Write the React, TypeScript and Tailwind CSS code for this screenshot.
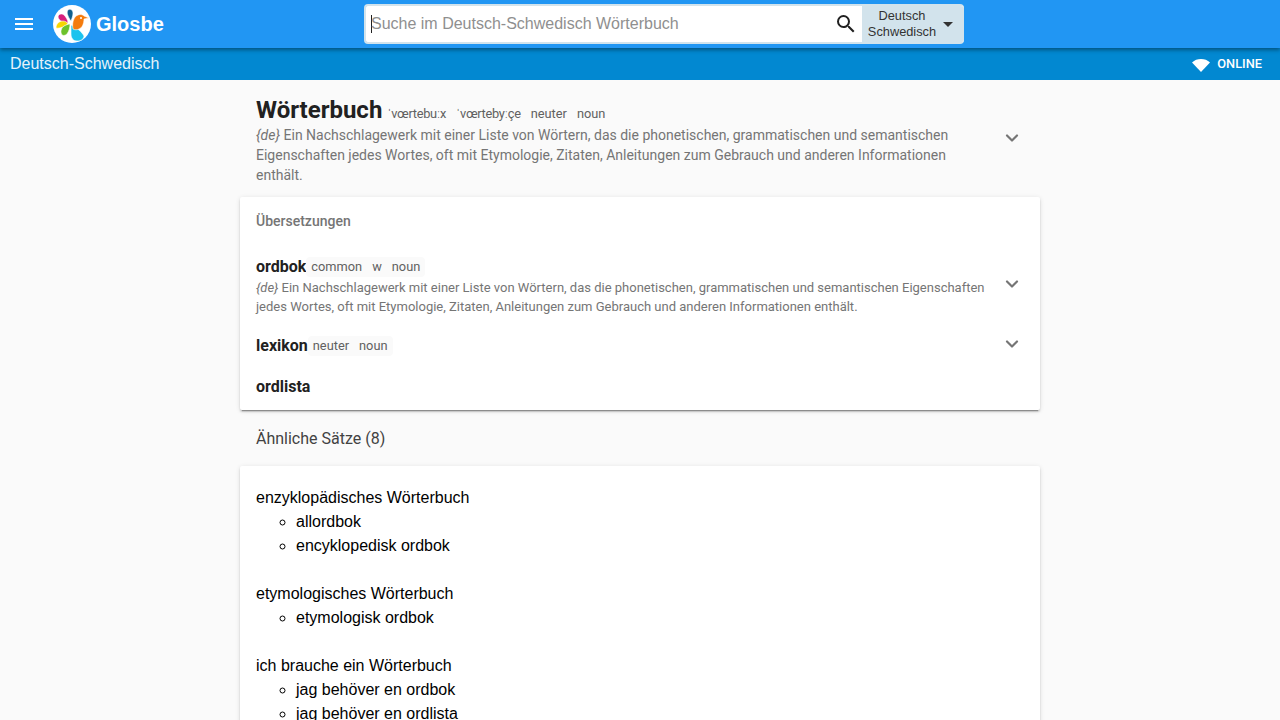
import { ChevronDown } from 'lucide-react'

const roboto = "font-['Roboto',sans-serif]"

function Logo() {
  return (
    <svg width="38" height="38" viewBox="0 0 38 38" className="shrink-0">
      <circle cx="19" cy="19" r="19" fill="#fff" />
      <g stroke="#fff" strokeWidth="0.6">
        <path d="M18 16C15 12 13 7 15 5c2-2 5 0 5 3 0 3-1 5-2 8z" fill="#0f5f8c" />
        <path d="M15 18C11 18 6 16 5 12c0-3 4-4 6-2 2 2 4 5 4 8z" fill="#d61f7c" />
        <path d="M3 23c0-4 3-7 7-7 2 0 4 1 5 3-3 2-8 5-12 4z" fill="#f7d600" />
        <path d="M9 30c-2-3-1-7 2-9 2-1 4-2 6-2 0 4-1 7-3 10-1 1-3 2-5 1z" fill="#6cc22b" />
        <path d="M18 20c5 2 11 7 13 11 0 3-3 5-7 5-4 0-6-3-6-7 0-3 0-6 0-9z" fill="#1cc3ee" />
        <path d="M20 24c-1-5 0-10 3-13 3-2 6-2 8 0l5 2-5 1c0 5-2 9-5 10-2 1-4 1-6 0z" fill="#f47b0d" />
      </g>
      <circle cx="28" cy="13" r="1" fill="#fff" />
    </svg>
  )
}

function Tag({ children }: { children: string }) {
  return <span className="px-[5px]">{children}</span>
}

function Tags({ items }: { items: string[] }) {
  return (
    <span className="inline-flex h-5 items-center rounded-sm bg-[#fafafa] text-[12.8px] text-[#616161]">
      {items.map((t) => (
        <Tag key={t}>{t}</Tag>
      ))}
    </span>
  )
}

function Chevron({ className }: { className: string }) {
  return <ChevronDown size={20} strokeWidth={2.6} className={`shrink-0 text-[#757575] ${className}`} />
}

const cardShadow = 'shadow-[0_2px_2px_rgba(0,0,0,0.14),0_3px_1px_-2px_rgba(0,0,0,0.3),0_1px_5px_rgba(0,0,0,0.12)]'

export default function App() {
  return (
    <div className={`h-[720px] w-[1280px] overflow-hidden bg-[#fafafa] ${roboto}`}>
      <header className="relative z-10 flex h-12 items-center bg-[#2196f3] font-['Liberation_Sans',sans-serif] shadow-[0_2px_4px_rgba(0,0,0,0.4)]">
        <div className="flex w-[364px] shrink-0 items-center">
          <svg width="24" height="24" viewBox="0 0 24 24" fill="#fff" className="ml-3">
            <path d="M3 18h18v-2H3v2zm0-5h18v-2H3v2zm0-7v2h18V6H3z" />
          </svg>
          <div className="ml-[17px]">
            <Logo />
          </div>
          <span className="ml-[5px] text-[20px] font-bold text-white">Glosbe</span>
        </div>
        <div className="flex h-10 w-[600px] items-stretch overflow-hidden rounded-sm border-2 border-[#d2e3ec] border-r-0 bg-white">
          <div className="flex flex-1 items-center pl-[5px] text-[16px] text-[#8f8f8f]">
            <span className="mr-[-1px] h-[18px] w-px bg-[#222]" />
            Suche im Deutsch-Schwedisch Wörterbuch
          </div>
          <div className="flex w-8 items-center justify-center">
            <svg width="24" height="24" viewBox="0 0 24 24" fill="#212121">
              <path d="M15.5 14h-.79l-.28-.27A6.47 6.47 0 0 0 16 9.5 6.5 6.5 0 1 0 9.500 16c1.61 0 3.09-.59 4.23-1.57l.27.28v.79l5 4.99L20.49 19l-4.99-5zm-6 0C7.01 14 5 11.99 5 9.5S7.01 5 9.5 5 14 7.01 14 9.5 11.99 14 9.5 14z" />
            </svg>
          </div>
          <div className="flex w-[102px] items-center bg-[#d2e3ec] text-[12.8px] leading-4 text-[#333]">
            <div className="w-[80px] text-center">
              Deutsch
              <br />
              Schwedisch
            </div>
            <span className="ml-[1px] h-0 w-0 border-x-[5px] border-t-[5px] border-x-transparent border-t-[#333]" />
          </div>
        </div>
      </header>

      <div className="flex h-8 items-center justify-between bg-[#0288d1] pl-[10px] pr-[18px] font-['Liberation_Sans',sans-serif] text-white">
        <span className="text-[16px] text-[#e6f3fa]">Deutsch-Schwedisch</span>
        <span className={`flex items-center gap-[7px] text-[12.8px] font-medium ${roboto}`}>
          <svg width="18" height="14" viewBox="0 0 18 14" fill="#fff" className="mt-[2px]">
            <path d="M0 4.5C2.5 2 5.5 1 9 1s6.500 1 9 3.500L9 14z" />
          </svg>
          ONLINE
        </span>
      </div>

      <main className="mx-auto w-[800px]">
        <section className="flex items-start pl-4 pt-[15px]">
          <div className="w-[704px]">
            <div className="flex h-[30px] items-center">
              <h1 className="text-[24px] font-bold leading-[30px] text-[#212121]">Wörterbuch</h1>
              <span className="ml-[5px] mt-2 inline-flex gap-[10px] text-[12.8px] text-[#616161]">
                <span className="tracking-[-0.3px]">ˈvœrtebuːx</span>
                <span className="tracking-[-0.3px]">ˈvœrtebyːçe</span>
                <span>neuter</span>
                <span>noun</span>
              </span>
            </div>
            <p className="text-[14px] leading-5 text-[#757575]">
              <i>{'{de}'}</i> Ein Nachschlagewerk mit einer Liste von Wörtern, das die phonetischen, grammatischen und semantischen Eigenschaften jedes Wortes, oft mit Etymologie, Zitaten, Anleitungen zum Gebrauch und anderen Informationen enthält.
            </p>
          </div>
          <Chevron className="ml-[42px] mt-[33px]" />
        </section>

        <section className={`mt-[12px] rounded-[2px] bg-white px-4 pb-[13px] pt-[14px] ${cardShadow}`}>
          <h2 className="text-[14px] font-medium leading-5 text-[#757575]">Übersetzungen</h2>

          <div className="mt-[26px] flex items-start">
            <div className="flex-1">
              <div className="flex h-5 items-center">
                <b className="text-[16px] font-bold text-[#212121]">ordbok</b>
                <Tags items={['common', 'w', 'noun']} />
              </div>
              <p className="mt-px w-[736px] text-[13px] leading-[19px] text-[#757575]">
                <i>{'{de}'}</i> Ein Nachschlagewerk mit einer Liste von Wörtern, das die phonetischen, grammatischen und semantischen Eigenschaften jedes Wortes, oft mit Etymologie, Zitaten, Anleitungen zum Gebrauch und anderen Informationen enthält.
              </p>
            </div>
            <Chevron className="mr-[2px] mt-[17px]" />
          </div>

          <div className="mt-5 flex items-start">
            <div className="flex h-5 flex-1 items-center">
              <b className="text-[16px] font-bold text-[#212121]">lexikon</b>
              <Tags items={['neuter', 'noun']} />
            </div>
            <Chevron className="mr-[2px] mt-[-2px]" />
          </div>

          <div className="mt-[21px] h-5 text-[16px] font-bold leading-5 text-[#212121]">ordlista</div>
        </section>

        <h2 className="px-4 pt-[19px] text-[16px] leading-5 text-[#424242]">Ähnliche Sätze (8)</h2>

        <section className={`mt-[17px] rounded-[2px] bg-white px-4 pt-5 font-['Liberation_Sans',sans-serif] text-[16px] leading-6 text-black ${cardShadow}`}>
          <div>enzyklopädisches Wörterbuch</div>
          <ul className="mb-6 list-[circle] pl-10">
            <li>allordbok</li>
            <li>encyklopedisk ordbok</li>
          </ul>
          <div>etymologisches Wörterbuch</div>
          <ul className="mb-6 list-[circle] pl-10">
            <li>etymologisk ordbok</li>
          </ul>
          <div>ich brauche ein Wörterbuch</div>
          <ul className="mb-6 list-[circle] pl-10">
            <li>jag behöver en ordbok</li>
            <li>jag behöver en ordlista</li>
          </ul>
        </section>
      </main>
    </div>
  )
}
